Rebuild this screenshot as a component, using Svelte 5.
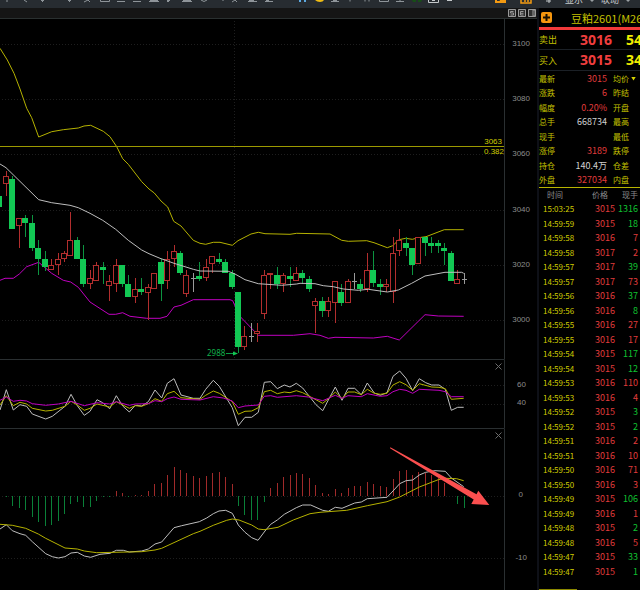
<script>
  const stepX = (i) => Math.round(6 + i * 6.444);

  // kind (u = up, d = down, f = flat), body top, body bottom, high, low
  const candles = [
    ['u',176,184,171,196],['d',179,229,176,229],['u',218,226,218,248],['d',218,223,215,237],
    ['d',223,248,215,251],['d',248,259,240,275],['d',259,267,251,271],['u',265,270,259,270],
    ['u',259,265,253,275],['u',253,259,251,262],['u',240,256,212,256],['d',240,259,237,259],
    ['d',259,284,245,287],['u',278,284,270,289],['u',265,281,262,281],['d',267,270,262,284],
    ['u',281,286,275,301],['u',265,284,259,292],['d',265,284,265,287],['d',284,297,275,297],
    ['u',289,297,278,303],['d',289,292,278,295],['u',287,293,284,320],['u',273,289,273,289],
    ['d',262,284,259,301],['u',259,281,251,289],['u',251,259,245,267],['d',253,273,251,275],
    ['u',275,294,270,297],['f',278,279,273,292],['d',276,278,262,281],['u',267,278,259,281],
    ['u',256,264,256,273],['d',259,262,253,264],['d',262,273,259,273],['d',273,287,270,289],
    ['d',292,347,292,353],['u',336,347,326,350],['f',336,337,323,342],['u',331,334,323,342],
    ['u',275,314,270,319],['u',273,275,273,289],['d',275,284,267,289],['u',275,284,273,292],
    ['d',276,278,267,287],['u',273,281,267,281],['d',273,278,270,284],['d',279,289,276,292],
    ['u',301,306,298,333],['d',301,311,297,317],['u',301,311,297,317],['u',281,303,281,323],
    ['d',292,303,284,306],['u',281,303,279,303],['f',281,282,273,289],['d',284,289,279,292],
    ['u',270,289,253,292],['d',270,283,251,287],['d',284,287,279,295],['u',284,287,279,292],
    ['u',253,292,237,303],['u',240,251,229,256],['d',243,248,237,256],['d',248,265,248,275],
    ['u',237,264,237,264],['d',237,243,237,256],['d',243,245,237,253],['d',243,245,240,253],
    ['d',248,251,243,265],['d',253,281,251,281],['u',279,284,270,284],['f',279,280,273,284]
  ];

  const bars = [
    -1,-10,-12,-14,-21,-26,-30,-29,-25,-18,-8,-6,-11,-11,-5,-1,-1,5,3,-1,1,1,5,12,13,21,29,26,23,20,
    18,20,23,24,19,12,-10,-19,-24,-24,-6,8,13,19,21,23,22,18,11,3,2,7,3,8,10,10,14,12,10,9,
    17,25,26,21,24,23,21,18,13,0,-8,-12
  ];

  const bands = {
    upper: '0,48.3 7.3,60 14,73.3 20,89 26.7,108.3 31.7,117.7 38.7,137 51.7,131.7 63.3,129.7 78.3,128 84,126 90.7,125.3 103.3,131.3 110,136.7 116.7,146.7 122.7,158.7 128.3,164.3 141.7,181.7 149,189 154.3,193 161,201 167.7,207 173.7,221.3 181,226 193.3,240.3 200,243.3 205.7,244.3 213.3,242.3 220,242.3 232.3,245.3 238,240.7 251,234 258.3,232.3 265,233.7 290,234.3 296.7,233.3 330,234 341.7,240.3 348.3,241.3 366.7,240.7 374,242.7 387.3,247.7 392.7,245.7 399,239.7 405.7,238.3 412.3,239.3 418.7,237.7 426,236.7 444.3,229.7 463.7,229.7',
    middle: '0,164 6,167.7 38.7,199.7 51.7,202.7 70,205.3 78.3,207.7 90,213.3 102.7,220.3 115.7,229.3 128.3,240.3 141.7,250 149,253.7 160,258.3 174,263.3 193.3,269.3 200,271 228.3,271.3 235,274 245,279.7 258.3,283.7 281.7,285.3 296.7,284 300,283.3 315,283.7 323.3,285.7 333.3,286.7 343.3,289 358.3,290.3 368.3,289.3 387.3,292 398.3,290 411.7,283.3 425,276 445,272.3 461.7,272.3 463.7,273.3',
    lower: '0,280.3 5,278.3 13.3,278.3 19.3,274 26.7,266.7 38.7,262.3 51.7,273.3 63.3,280.3 70.7,282 78.3,287.3 90,302 109,314.3 115.7,314.3 122.7,312.7 130,316.3 146.7,318.3 160,318.3 167,316.3 174,307 181,305.3 193.3,299.7 230,299.7 232.7,300.7 239.3,315.7 258.3,335.3 293.3,335.3 310,333.7 320,335.3 328.3,338.3 335,337.3 373.3,338 387.3,336.3 399.3,340 425,314.7 438.3,316 463.7,316.3'
  };

  const rsi = {
    slow: '0,400.3 6.3,397 13.3,401.3 20,400.3 26.7,401 32.3,403.7 45.7,405.3 58.3,404 71,401.3 84.3,405.7 97,402.7 109.7,404 116.3,401.7 129.3,405.3 135.3,404 148.3,403.7 155,400.7 161.7,401.7 167.3,398.7 174,397 181,399.3 200,400 213.3,396.7 223.3,398 232.3,401 238.3,407.7 245,406 258.3,405 264.3,396.3 270.7,395.7 277.3,397.3 296.3,395.7 308.3,397 322.7,400.7 335.3,395.3 342,398.3 348,395.7 361.3,396.7 367.3,393.7 380.3,396.3 387,395.7 393,391.7 399.7,389.3 406,390.3 412.7,393.3 419.3,389.3 439,390.3 445.3,391.7 451.3,396.7 463.7,396.7',
    mid: '0,405 6.3,395.7 13.3,405.7 20,402.3 26.7,404 32.3,408.3 45.7,411 52.3,410.3 65,406.3 71,401.3 77.3,405 84.3,410.3 90,408.3 97,404 109.7,407 116.3,401.7 129.3,408.3 135.3,405.7 141.7,406.3 148.3,403.7 155,398.7 161.7,401.3 167.3,393.7 174,391.3 181,397.7 200,399.3 205.7,395.3 213.3,391 219.3,393.3 232.3,401.7 238.3,414.3 245,411.3 251.7,411 258.3,407.7 264.3,391.7 270.7,390.3 277.3,393.7 284.3,392 290,392.7 296.3,390.7 302.7,392.7 322.7,403.3 329,398.3 335.3,392 342,398.7 348,392 354.7,392 361.3,394.7 367.3,389.3 374.3,393.3 380.3,394.3 387,393.3 393,385 399.7,381.7 406,384.7 412.7,390.3 419.3,383.7 431.7,387 439,387.3 445.3,388.7 451.3,399.3 463.7,398.3',
    fast: '0,410 6.3,389.7 13.3,410 20,404.7 26.7,406.3 32.3,414 45.7,419 52.3,416.3 65,406.3 71,394.3 77.3,405.7 84.3,415.3 90,411.3 97,399.7 102.7,402.7 109.7,408.7 116.3,395.7 122.7,406 129.3,412 135.3,405.3 141.7,406 148.3,401.7 155,390 161.7,398 167.3,383.3 174,378.7 181,395 193.3,398.3 200,398.3 205.7,389.3 213.3,380.3 219.3,386.3 232.3,407.7 238.3,425.7 245,417.3 251.7,417.3 258.3,412.3 264.3,382.3 270.7,381.7 277.3,388.7 284.3,385 290,387 296.3,383.3 302.7,388 316,404.7 322.7,410.7 329,398.7 335.3,387 342,400.3 348,388.3 354.7,388.3 361.3,394.7 367.3,383 374.3,393 380.3,395.3 387,392.7 393,376.3 399.7,371 406,378.3 412.7,390.7 419.3,378.7 425.7,382.7 431.7,385 439,385 445.3,389.3 451.3,410.3 457.7,407.3 463.7,407.3'
  };

  const macd = {
    dif: '0,529 6.3,524.7 12.3,530.7 20,533.7 25.7,535.3 32.3,541.7 45.7,553.7 52.3,556.7 58.3,558 65,556.7 71,553 77.3,552.3 84.3,556 90.7,557.3 100,554.3 110,553.3 116.3,550.3 123.3,550.3 129.3,552 141.7,551 148.3,549 155,544 161.7,542 174,527.7 181.7,525.7 199.3,521.7 206.7,518 213.3,513.7 219,511 225.7,510.3 232.3,513.3 238.3,525 245,532.3 251.7,537.7 258,540.3 265,531 270.7,524.3 277.3,520 284.3,514.3 296.3,507.7 302.7,505 310.7,505 322.7,510.3 328.3,511.3 335.3,507.3 342,508.3 354.7,503 361.3,502 367.3,498.7 387,497.3 393,491 399.7,483.7 406,480.7 412.7,480 419.3,475 425.7,472.3 435,470.7 445.3,471.3 451.3,478 463.7,486.7',
    dea: '0,524.3 12.3,525.3 25.7,528.3 38.3,534 45.7,538.3 65,548 77.3,549 84.3,551 96.7,552.7 141.7,551.7 155,550 161.7,548.3 193.3,533.7 200,531.3 213.3,525.3 226.7,520.3 232.3,519 239,520 251.7,525 258.3,529 264,529.7 278,527.3 293.3,520 310,513.7 320,512.3 346.7,510.3 367.3,505.7 387,501.7 399.7,497 419.3,487 438.3,479.7 445.3,478.3 456.7,478.7 463.7,480.7'
  };

  const priceTicks = [[3100, 44], [3080, 99], [3060, 154], [3040, 210], [3020, 265], [3000, 320]];

  const quote = [
    ['最新', '3015', 'red', '均价'],
    ['涨跌', '6', 'red', '昨结'],
    ['幅度', '0.20%', 'red', '开盘'],
    ['总手', '668734', 'white', '最高'],
    ['现手', '', 'white', '最低'],
    ['涨停', '3189', 'red', '跌停'],
    ['持仓', '140.4万', 'white', '仓差'],
    ['外盘', '327034', 'red', '内盘']
  ];

  const trades = [
    ['15:03:25', 3015, 1316, 'g'], ['14:59:59', 3015, 18, 'g'], ['14:59:58', 3016, 7, 'r'],
    ['14:59:58', 3017, 2, 'r'], ['14:59:57', 3017, 39, 'g'], ['14:59:57', 3017, 73, 'r'],
    ['14:59:56', 3016, 37, 'g'], ['14:59:56', 3016, 8, 'g'], ['14:59:55', 3016, 27, 'r'],
    ['14:59:55', 3016, 17, 'r'], ['14:59:54', 3015, 117, 'g'], ['14:59:54', 3015, 12, 'g'],
    ['14:59:53', 3016, 110, 'r'], ['14:59:53', 3016, 4, 'r'], ['14:59:52', 3015, 3, 'g'],
    ['14:59:52', 3015, 2, 'g'], ['14:59:51', 3016, 2, 'r'], ['14:59:51', 3016, 10, 'r'],
    ['14:59:50', 3016, 71, 'r'], ['14:59:50', 3016, 3, 'r'], ['14:59:49', 3015, 106, 'g'],
    ['14:59:49', 3016, 1, 'r'], ['14:59:48', 3015, 2, 'g'], ['14:59:48', 3016, 5, 'r'],
    ['14:59:47', 3015, 33, 'g'], ['14:59:47', 3015, 1, 'g']
  ];
</script>

{#snippet closeButton(label)}
  <button class="close" aria-label={label}>
    <svg viewBox="0 0 7 7"><path d="M.5 .5 6.5 6.5M6.5 .5 .5 6.5" /></svg>
  </button>
{/snippet}

<div class="terminal">
  <header class="toolbar">
    <svg class="tools" viewBox="0 0 560 8" aria-hidden="true">
      <g fill="none" stroke="#8e9499">
        <path d="M7 0v2M24 0l3 2M42.500 0v2M41 .5h3M69.500 0v2M68 .5h3M84 2l4-2 2 2M88 0l3-1" />
        <path d="M100.500 0v1.500h9V0M117 1.500h8M133 1.500h8M149 1.500h10M150 .5h8M167 .5h3M167 1.500h2" />
        <path d="M182 1.500h10M183 .5h8M201 0q3 3 6 0M223 0v1M232 2l3-2 2 2M248 1.500h9M249 .5h5M265 1.500h8M266 .5h3" />
        <path d="M331 1.500h8M333 .5h4M350 0v1.500M365 0v1.500M369 0v1.500M379.500 0v1.500h9V0M396 1.500h8M400 0v2" />
        <path d="M428.500 0v2.500h10V0M432 .5h3M447 .5h5" stroke="#c4c8cb" />
      </g>
      <path d="M299 0h2v2h-2zM304 0h2v2h-2z" fill="#5da9e0" />
      <path d="M315 0h9q-1 2-4 2-3 0-5-2z" fill="#f0bd14" />
      <path d="M412 0h4v2h-3zM418 0h4l-1 2h-3z" fill="#174d17" />
      <g fill="none" stroke="#f39a12" stroke-width="2">
        <path d="M496 0v2h9V0M500 0q4 2 5-1" />
        <path d="M521 0v3h10V0M525 0v2M528 0v2" stroke-width="1.500" />
      </g>
      <path d="M546 1h5M549 0v3" stroke="#c4c8cb" />
    </svg>
    <nav class="menus">
      <button>显示</button><i></i>
      <button>联动</button><i></i>
    </nav>
  </header>

  <main class="body">
    <div class="charts">
      <div class="strip">
        <button class="mini" aria-label="S">
          <svg viewBox="0 0 8 8"><path d="M.5 .5h7v7h-7zM5.500 2.500h-3V4h3v2h-3" /></svg>
        </button>
        <button class="mini" aria-label="E">
          <svg viewBox="0 0 8 8"><path d="M.5 .5h7v7h-7zM5.500 2.500h-3v3.500h3M3 4.300h2.500" /></svg>
        </button>
        <button class="mini" aria-label="分栏">
          <svg viewBox="0 0 8 8"><path d="M.5 .5h7v7h-7z" /><path d="M5 1h2v6H5z" fill="#9a9a9a" /></svg>
        </button>
      </div>

      <section class="panel">
        <svg class="plot" viewBox="0 19 538 340" role="img" aria-label="K线图">
          <g class="grid">
            {#each priceTicks as [, y]}<path d="M2 {y + 0.5}H504" />{/each}
            <path d="M234.500 21V358" />
          </g>
          <g class="axis">
            {#each priceTicks as [label, y]}<text x="530" y={y + 2}>{label}</text>{/each}
          </g>
          <polyline class="line yellow" points={bands.upper} />
          <polyline class="line magenta" points={bands.lower} />
          <g class="candles">
            <rect class="down" x="0" y="196" width="2" height="11" />
            {#each candles as [kind, top, bottom, high, low], i}
              {@const x = stepX(i)}
              <rect class="wick {kind}" {x} y={high} width="1" height={low - high} />
              {#if kind === 'u'}
                <rect class="up" x={x - 2.5} y={top + 0.5} width="5" height={Math.max(bottom - top - 1, 1)} />
              {:else if kind === 'd'}
                <rect class="down" x={x - 3} y={top} width="6" height={Math.max(bottom - top, 3)} />
              {:else}
                <rect class="wick f" x={x - 2} y={top} width="5" height="1" />
              {/if}
            {/each}
          </g>
          <polyline class="line white" points={bands.middle} />
          <path class="level" d="M0 146.500H505" />
          <text class="level-text" x="502" y="144">3063</text>
          <text class="level-text" x="504" y="154">0.382</text>
          <text class="low-text" x="207" y="356">2988</text>
          <path d="M226 353.500H234" stroke="#0c9c46" />
          <path d="M233 351.500 238 353.500 233 355.500z" fill="#12c854" />
          <path class="frame" d="M504.500 19V359" />
        </svg>
      </section>

      <section class="panel">
        <svg class="plot" viewBox="0 359 538 69" role="img" aria-label="RSI">
          <path class="frame" d="M0 359.500H504.500V428" />
          <g class="grid"><path d="M2 385.500H504M2 404.500H504" /></g>
          <g class="axis"><text x="526" y="387">60</text><text x="526" y="405">40</text></g>
          <polyline class="line white" points={rsi.fast} />
          <polyline class="line yellow" points={rsi.mid} />
          <polyline class="line magenta" points={rsi.slow} />
        </svg>
        {@render closeButton('关闭 RSI')}
      </section>

      <section class="panel">
        <svg class="plot" viewBox="0 428 538 162" role="img" aria-label="MACD">
          <path class="frame" d="M0 428.500H504.500V590" />
          <g class="grid"><path d="M2 496.500H504M2 558.500H504" /></g>
          <g class="axis"><text x="523" y="497">0</text><text x="527" y="560">-10</text></g>
          <g class="candles">
            {#each bars as h, i}
              <rect class={h > 0 ? 'bar-up' : 'bar-down'} x={stepX(i)} y={h > 0 ? 496 - h : 496} width="1" height={Math.abs(h)} />
            {/each}
          </g>
          <polyline class="line white" points={macd.dif} />
          <polyline class="line yellow" points={macd.dea} />
          <path d="M390.300 447.300 476.500 494.300 478.300 490.700 489.300 505 471.300 504 473.700 499.500 390 448.200z" fill="#fb4f4f" />
        </svg>
        {@render closeButton('关闭 MACD')}
      </section>
    </div>

    <aside class="quote">
      <div class="title">
        <button class="add" aria-label="添加"><svg viewBox="0 0 11 11"><path d="M5.500 2v7M2 5.500h7" /></svg></button>
        <h1>豆粕2601(M26</h1>
      </div>
      <div class="offer"><span>卖出</span><b>3016</b><em>54</em></div>
      <div class="offer"><span>买入</span><b>3015</b><em>34</em></div>
      <dl class="stats">
        {#each quote as [name, value, tone, other], i}
          <div>
            <dt>{name}</dt>
            <dd class={tone}>{value}</dd>
            <dt class="other">{other}{#if i === 0}<i></i>{/if}</dt>
          </div>
        {/each}
      </dl>
      <table>
        <thead><tr><th>时间</th><th>价格</th><th>现手</th></tr></thead>
        <tbody>
          {#each trades as [time, price, volume, side]}
            <tr><td>{time}</td><td>{price}</td><td class={side}>{volume}</td></tr>
          {/each}
        </tbody>
      </table>
      <div class="scroll"></div>
    </aside>
  </main>
</div>

<style>
  :global(body) { background: #000; }
  .terminal {
    display: flex; flex-direction: column; min-height: 100vh; overflow: hidden;
    background: #000; color: #c8c8c8;
    font-family: "Noto Sans CJK SC", "Noto Sans", sans-serif;
  }
  button { padding: 0; border: 0; background: none; color: inherit; font: inherit; cursor: pointer; }
  svg { display: block; }

  .toolbar { display: flex; align-items: flex-start; height: 8px; overflow: hidden; background: #272c31; }
  .tools { flex: none; width: 560px; height: 8px; }
  .menus { display: flex; align-self: flex-end; align-items: flex-end; gap: 7px; margin-left: 5px; padding-bottom: 3px; font-size: 9px; line-height: 10px; color: #c4c8cb; }
  .menus button { flex: none; line-height: 10px; }
  .menus i { width: 4px; height: 2px; margin-bottom: 3px; background: #9a9fa3; clip-path: polygon(0 0, 100% 0, 50% 100%); }

  .body { display: flex; flex: 1; }
  .charts { flex: 1; min-width: 0; }
  .strip { display: flex; justify-content: flex-end; align-items: center; gap: 2px; box-sizing: border-box; height: 11px; padding-right: 2px; background: #151515; border-bottom: 1px solid #2a3030; }
  .mini svg { width: 8px; height: 8px; background: #303030; }
  .mini path { fill: none; stroke: #9a9a9a; }

  .panel { position: relative; }
  .plot { width: 100%; height: auto; }
  .close { position: absolute; top: 4px; right: 36px; }
  .close svg { width: 7px; height: 7px; }
  .close path { stroke: #6c6c6c; fill: none; }

  .grid path { stroke: #1e1e1e; stroke-dasharray: 1 2; fill: none; }
  .frame { stroke: #2a2f31; fill: none; }
  .axis text { font: 8px "Liberation Sans", Arial, sans-serif; text-anchor: end; fill: #8c8c8c; }
  .line { fill: none; stroke-width: 1; }
  .line.yellow { stroke: #b5b200; }
  .line.white { stroke: #bdbdbd; }
  .line.magenta { stroke: #c000c0; }
  .level { stroke: #9c9900; }
  .level-text { font: 8px "Liberation Sans", Arial, sans-serif; text-anchor: end; fill: #d0cc00; }
  .low-text { font: 8px "Noto Sans", sans-serif; fill: #10b04c; }
  .candles { shape-rendering: crispEdges; }
  .up { fill: #000; stroke: #b22e2e; }
  .down { fill: #12c854; }
  .wick.u { fill: #b22e2e; }
  .wick.d { fill: #0c9440; }
  .wick.f { fill: #9a9a9a; }
  .bar-up { fill: #a02a2a; }
  .bar-down { fill: #0a8038; }

  .quote { flex: none; display: flex; flex-direction: column; box-sizing: border-box; width: 103px; margin-left: -1px; border-left: 2px solid #0e1017; overflow: hidden; }
  .title { display: flex; align-items: center; box-sizing: border-box; height: 22px; padding-left: 2px; border-bottom: 3px solid #f23a3a; white-space: nowrap; }
  .add { flex: none; }
  .add svg { width: 11px; height: 11px; border-radius: 2px; background: #f5960f; }
  .add path { stroke: #1a1000; stroke-width: 2; }
  h1 { margin: 0 0 0 19px; font-size: 11px; font-weight: 400; line-height: 16px; color: #c4c000; }
  .offer { display: flex; align-items: center; box-sizing: border-box; height: 20px; border-bottom: 1px solid #1b2026; white-space: nowrap; }
  .offer + .offer { height: 21px; }
  .offer span { flex: none; width: 41px; font-size: 9px; color: #c4c000; }
  .offer b, .offer em { width: 46px; flex: none; font: 700 14px/18px "Noto Sans", sans-serif; color: #f03e3e; }
  .offer em { width: 16px; color: #f0ee00; }

  .stats { margin: 0; border-bottom: 1px solid #b8b400; }
  .stats div { display: flex; align-items: center; height: 15px; font-size: 9px; line-height: 14px; }
  .stats div:nth-child(even) { height: 14px; }
  dt { width: 20px; flex: none; font-size: 8px; color: #c4c000; }
  dd { width: 48px; flex: none; margin: 0; text-align: right; }
  dt.other { display: flex; align-items: center; gap: 2px; margin-left: 6px; width: 26px; }
  dt i { width: 5px; height: 4px; background: #d8d400; clip-path: polygon(0 0, 100% 0, 50% 100%); }
  dd.red { color: #e03c3c; }
  dd.white { color: #d0d0d0; }

  table { width: 100%; border-collapse: collapse; table-layout: fixed; font-size: 9px; line-height: 14px; white-space: nowrap; }
  tr { height: 14px; }
  tbody tr:nth-child(even) { height: 15px; }
  th, td { box-sizing: border-box; padding: 0 2px 0 0; text-align: right; }
  th { font-size: 8px; font-weight: 400; color: #8c8c8c; }
  th:first-child { width: 44px; padding: 0 0 0 8px; text-align: left; }
  th:nth-child(2) { width: 33px; padding-right: 8px; }
  td { color: #e03c3c; }
  td:first-child { padding: 0 0 0 4px; text-align: left; font-size: 8px; color: #d0cc00; }
  td:nth-child(2) { padding-right: 1px; }
  td.g { color: #10c030; }
  .scroll { width: 38px; height: 1px; margin-top: auto; background: #8c8900; }
</style>
